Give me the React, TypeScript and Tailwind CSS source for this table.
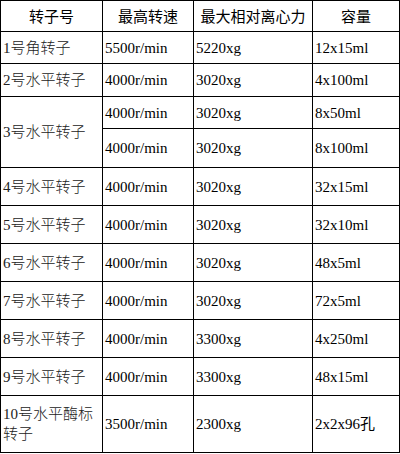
type Row = {
  name: string
  speed: string
  force: string
  capacity: string
  h: string
}

const rows: Row[] = [
  { name: '1号角转子', speed: '5500r/min', force: '5220xg', capacity: '12x15ml', h: 'h-[32px]' },
  { name: '2号水平转子', speed: '4000r/min', force: '3020xg', capacity: '4x100ml', h: 'h-[33px]' },
]

const rest: Row[] = [
  { name: '4号水平转子', speed: '4000r/min', force: '3020xg', capacity: '32x15ml', h: 'h-[38px]' },
  { name: '5号水平转子', speed: '4000r/min', force: '3020xg', capacity: '32x10ml', h: 'h-[38px]' },
  { name: '6号水平转子', speed: '4000r/min', force: '3020xg', capacity: '48x5ml', h: 'h-[38px]' },
  { name: '7号水平转子', speed: '4000r/min', force: '3020xg', capacity: '72x5ml', h: 'h-[38px]' },
  { name: '8号水平转子', speed: '4000r/min', force: '3300xg', capacity: '4x250ml', h: 'h-[38px]' },
  { name: '9号水平转子', speed: '4000r/min', force: '3300xg', capacity: '48x15ml', h: 'h-[38px]' },
  { name: '10号水平酶标转子', speed: '3500r/min', force: '2300xg', capacity: '2x2x96孔', h: 'h-[57px]' },
]

const cell = 'border-[1.5px] border-black px-[2px] py-0 text-left align-middle leading-[20px]'
const nameCell = cell + ' font-light text-[#222]'
const head = 'border-[1.5px] border-black px-[2px] py-0 text-center align-middle font-normal leading-[20px]'

function DataRow({ row }: { row: Row }) {
  return (
    <tr className={row.h}>
      <td className={nameCell}>{row.name}</td>
      <td className={cell}>{row.speed}</td>
      <td className={cell}>{row.force}</td>
      <td className={cell}>{row.capacity}</td>
    </tr>
  )
}

export default function App() {
  return (
    <div className="w-[400px] h-[454px] bg-white overflow-hidden">
      <table className="table-fixed border-collapse w-[399px] text-[15px] text-black font-['Liberation_Serif','Noto_Sans_CJK_SC',serif]">
        <colgroup>
          <col className="w-[102px]" />
          <col className="w-[91px]" />
          <col className="w-[119px]" />
          <col className="w-[87px]" />
        </colgroup>
        <thead>
          <tr className="h-[31px] font-['Noto_Sans_CJK_SC',sans-serif]">
            <th className={head}>转子号</th>
            <th className={head}>最高转速</th>
            <th className={head}>最大相对离心力</th>
            <th className={head}>容量</th>
          </tr>
        </thead>
        <tbody>
          {rows.map((r) => (
            <DataRow key={r.name} row={r} />
          ))}
          {/* 3号 spans two rows */}
          <tr className="h-[32px]">
            <td rowSpan={2} className={nameCell}>3号水平转子</td>
            <td className={cell}>4000r/min</td>
            <td className={cell}>3020xg</td>
            <td className={cell}>8x50ml</td>
          </tr>
          <tr className="h-[39px]">
            <td className={cell}>4000r/min</td>
            <td className={cell}>3020xg</td>
            <td className={cell}>8x100ml</td>
          </tr>
          {rest.map((r) => (
            <DataRow key={r.name} row={r} />
          ))}
        </tbody>
      </table>
    </div>
  )
}
